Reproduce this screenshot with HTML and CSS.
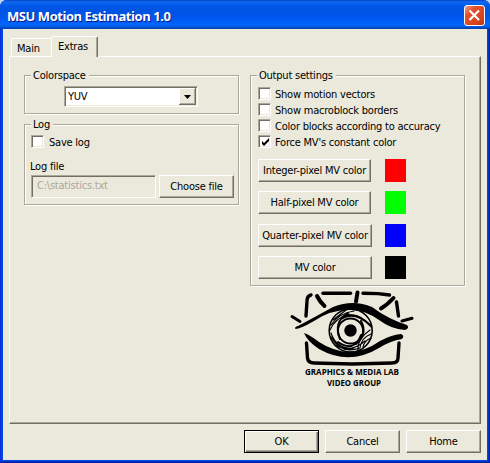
FILE: index.html
```html
<!DOCTYPE html>
<html lang="en">
<head>
<meta charset="utf-8">
<title>MSU Motion Estimation 1.0</title>
<link rel="stylesheet" href="styles.css">
</head>
<body>
<div class="window">
  <header class="titlebar">
    <h1 class="title">MSU Motion Estimation 1.0</h1>
    <button class="close" aria-label="Close"><svg width="21" height="21" viewBox="0 0 21 21"><path d="M5.500 5.500 15 15M15 5.500 5.500 15" stroke="#fff" stroke-width="2.200" fill="none"/></svg></button>
  </header>
  <main class="client">
    <nav class="tabs">
      <span class="tab">Main</span>
      <span class="tab active">Extras</span>
    </nav>
    <section class="panel">
      <div class="column left">
        <div class="group colorspace">
          <span class="legend">Colorspace</span>
          <div class="combo"><span>YUV</span><span class="drop"><svg width="7" height="4" viewBox="0 0 7 4"><path d="M0 0h7L3.500 4z"/></svg></span></div>
        </div>
        <div class="group log">
          <span class="legend">Log</span>
          <div class="check"><i class="box"></i><span>Save log</span></div>
          <div class="label">Log file</div>
          <div class="file-row">
            <div class="field">C:\statistics.txt</div>
            <button class="btn">Choose file</button>
          </div>
        </div>
      </div>
      <div class="column right">
        <div class="group output">
          <span class="legend">Output settings</span>
          <div class="check"><i class="box"></i><span>Show motion vectors</span></div>
          <div class="check"><i class="box"></i><span>Show macroblock borders</span></div>
          <div class="check"><i class="box"></i><span>Color blocks according to accuracy</span></div>
          <div class="check"><i class="box"><svg width="9" height="9" viewBox="0 0 9 9"><path d="M1 3v3l2 2 5-5V0L3 5z"/></svg></i><span>Force MV's constant color</span></div>
          <div class="colors">
            <button class="btn">Integer-pixel MV color</button><i class="swatch red"></i>
            <button class="btn">Half-pixel MV color</button><i class="swatch green"></i>
            <button class="btn wide">Quarter-pixel MV color</button><i class="swatch blue"></i>
            <button class="btn wide">MV color</button><i class="swatch black"></i>
          </div>
        </div>
        <svg class="logo" width="150" height="107" viewBox="0 0 150 107">
          <g fill="none" stroke="#000" stroke-linecap="round" stroke-linejoin="round">
            <g stroke-width="3.400">
              <path d="M31 8Q27 9 27 14L26 29"/>
              <path d="M43 6.300H70.500"/>
              <path d="M83 6.300L98 6.600 109.500 8"/>
              <path d="M116.500 15L118.500 29"/>
              <path d="M26.500 56L27.500 71Q28 76 34 76L72 77 112 76Q118 76 118 71L119 56"/>
            </g>
            <path stroke-width="4" d="M37 9Q40 15 44.500 19M77.500 5.500L76 14.500M113.500 11Q107 18 101 21.500"/>
            <path stroke-width="3" d="M12 29.500L20 34.500M122 34L132 31.300"/>
            <circle cx="70.700" cy="43.500" r="21.500" stroke-width="1.600"/>
            <circle cx="70.500" cy="44" r="12.500" stroke-width="1.800"/>
            <path stroke-width="2" d="M60 52Q53 35 68 26M58 55Q74 66 81 48M81 34Q88 47 76 57M61 32Q74 23 90 38"/>
            <path stroke-width="1.200" d="M51 38Q59 26 74 24M50 43Q55 31 69 27M53 33L66 23M65 29Q79 24 91 40M51 50Q61 68 80 61M51 46Q56 62 75 62M55 58Q70 67 85 54M80 61Q81 51 91 47M83 60Q84 54 91 51M78 63Q77 52 90 43"/>
          </g>
          <path d="M15.500 42Q14 40 18 39Q35 30 53 20Q73 12 92 20Q108 32 127 38Q130 41 125 43Q111 42 99 33Q84 22 68 23Q50 23 34 34Q20 42 15.500 42z"/>
          <path d="M24 46Q30 48 39 55Q70 75 100 54Q111 48 121 47Q125 49 122 52Q110 54 99 61Q69 79 39 62Q27 54 24 46z"/>
          <circle cx="70.500" cy="43.500" r="6.200"/>
          <text x="25" y="88" textLength="94" lengthAdjust="spacingAndGlyphs">GRAPHICS &amp; MEDIA LAB</text>
          <text x="47" y="98.500" textLength="54" lengthAdjust="spacingAndGlyphs">VIDEO GROUP</text>
        </svg>
      </div>
    </section>
    <footer class="actions">
      <button class="btn default">OK</button>
      <button class="btn">Cancel</button>
      <button class="btn">Home</button>
    </footer>
  </main>
</div>
</body>
</html>
```
FILE: styles.css
```css
* { box-sizing: border-box; }
body {
  margin: 0;
  background: #c5d4ee;
  font: 11px/13px "DejaVu Sans Condensed", "DejaVu Sans", sans-serif;
  font-stretch: condensed;
  letter-spacing: -0.22px;
  color: #000;
}
button { font: inherit; letter-spacing: inherit; color: inherit; padding: 0; margin: 0; }
svg { display: block; }
.window {
  width: 490px;
  height: 463px;
  padding: 0 3px 3px;
  border-radius: 7px 7px 0 0;
  background: #0046e0;
  box-shadow: inset 1px 0 #0831d9, inset -1px -1px #001ea0, inset -2px -2px #0036c8;
  overflow: hidden;
}
.titlebar {
  height: 29px;
  margin: 0 -3px;
  padding: 5px 5px 0 7px;
  display: flex;
  justify-content: space-between;
  background: linear-gradient(#0046c8 0, #1668ee 2px, #0262ee 4px, #0057e5 6px, #0054e3 12px, #0055eb 16px, #005bf5 20px, #0264fa 24px, #0062ef 26px, #0052d6 27px, #0040ab 29px);
}
.title {
  margin: 0;
  font: bold 13px/22px "Open Sans", "Noto Sans", sans-serif;
  letter-spacing: -0.45px;
  color: #fff;
  text-shadow: 1px 1px #0a1883;
  white-space: nowrap;
}
.close {
  width: 21px;
  height: 21px;
  border: 1px solid #fff;
  border-radius: 3px;
  background: linear-gradient(135deg, #f0a58e, #e2502c 30%, #d8431c 75%, #b33010);
}
.close svg { margin: -1px; }
.client { height: 431px; padding: 7px 6px 0; background: #ebe9db; }
.tabs { height: 20px; display: flex; align-items: flex-end; padding-left: 2px; }
.tab {
  width: 40px;
  height: 18px;
  padding: 3px 0 0 5px;
  border: 1px solid #fff;
  border-right-width: 0;
  border-bottom: 0;
  border-radius: 2px 0 0;
}
.tab.active {
  position: relative;
  z-index: 1;
  width: 47px;
  height: 21px;
  margin-bottom: -1px;
  padding: 3px 0 0 6px;
  border-right: 1px solid #716f64;
  border-radius: 2px 2px 0 0;
  background: #ebe9db;
  box-shadow: inset -1px 0 #aca899;
}
.panel {
  width: 472px;
  height: 368px;
  padding: 18px 0 0 14px;
  border: 1px solid;
  border-color: #fff #716f64 #716f64 #fff;
  box-shadow: inset -1px -1px #aca899;
  display: flex;
  gap: 11px;
}
.column { width: 215px; }
.group {
  border: 1px solid #aca899;
  box-shadow: 1px 1px #fff, inset 1px 1px #fff;
}
.legend {
  display: block;
  width: max-content;
  height: 13px;
  margin: -7px 0 0 6px;
  padding: 0 3px 0 2px;
  background: #ebe9db;
}
.colorspace { height: 39px; }
.combo {
  width: 134px;
  height: 21px;
  margin: 4px 0 0 39px;
  padding: 1px 1px 1px 3px;
  display: flex;
  justify-content: space-between;
  align-items: center;
  border: 1px solid;
  border-color: #aca899 #fff #fff #aca899;
  box-shadow: inset 1px 1px #716f64, inset -1px -1px #ebe9db;
  background: #fff;
}
.drop {
  width: 17px;
  height: 17px;
  display: grid;
  place-items: center;
  background: #ebe9db;
  box-shadow: inset -1px -1px #716f64, inset 1px 1px #fff, inset -2px -2px #aca899;
}
.log { height: 81px; margin-top: 10px; }
.check { height: 16px; padding-left: 7px; display: flex; gap: 4px; align-items: flex-start; white-space: nowrap; }
.check span { padding-top: 1px; }
.box {
  width: 13px;
  height: 13px;
  padding: 2px;
  flex: none;
  border: 1px solid;
  border-color: #aca899 #fff #fff #aca899;
  box-shadow: inset 1px 1px #716f64, inset -1px -1px #ebe9db;
  background: #fff;
}
.log .check { margin-top: 4px; padding-left: 6px; gap: 5px; }
.label { margin: 9px 0 0 5px; }
.file-row { display: flex; gap: 3px; margin: 2px 0 0 6px; }
.field {
  width: 125px;
  height: 23px;
  padding: 3px 5px;
  border: 1px solid;
  border-color: #aca899 #fff #fff #aca899;
  box-shadow: inset 1px 1px #716f64;
  color: #aca899;
}
.btn {
  width: 75px;
  height: 23px;
  border: 1px solid;
  border-color: #fff #716f64 #716f64 #fff;
  box-shadow: inset -1px -1px #aca899;
  background: #ebe9db;
  text-align: center;
  white-space: nowrap;
}
.output { height: 211px; }
.output .legend + .check { margin-top: 5px; }
.colors {
  display: grid;
  grid-template-columns: 114px 21px;
  grid-template-rows: 23px 23px 23px 23px;
  column-gap: 13px;
  row-gap: 9.4px;
  margin: 8px 0 0 7px;
}
.colors .btn { width: 113px; }
.colors .wide { width: 114px; }
.swatch { width: 21px; height: 23px; }
.red { background: #f00; }
.green { background: #0f0; }
.blue { background: #00f; }
.black { background: #000; }
.logo { margin: 1px 0 0 30px; font: bold 8.5px "Open Sans", "Noto Sans", sans-serif; letter-spacing: 0; }
.actions { display: flex; justify-content: flex-end; gap: 6px; padding-top: 6px; }
.default { border-color: #000; box-shadow: inset 1px 1px #fff, inset -1px -1px #716f64, inset -2px -2px #aca899; }
```
